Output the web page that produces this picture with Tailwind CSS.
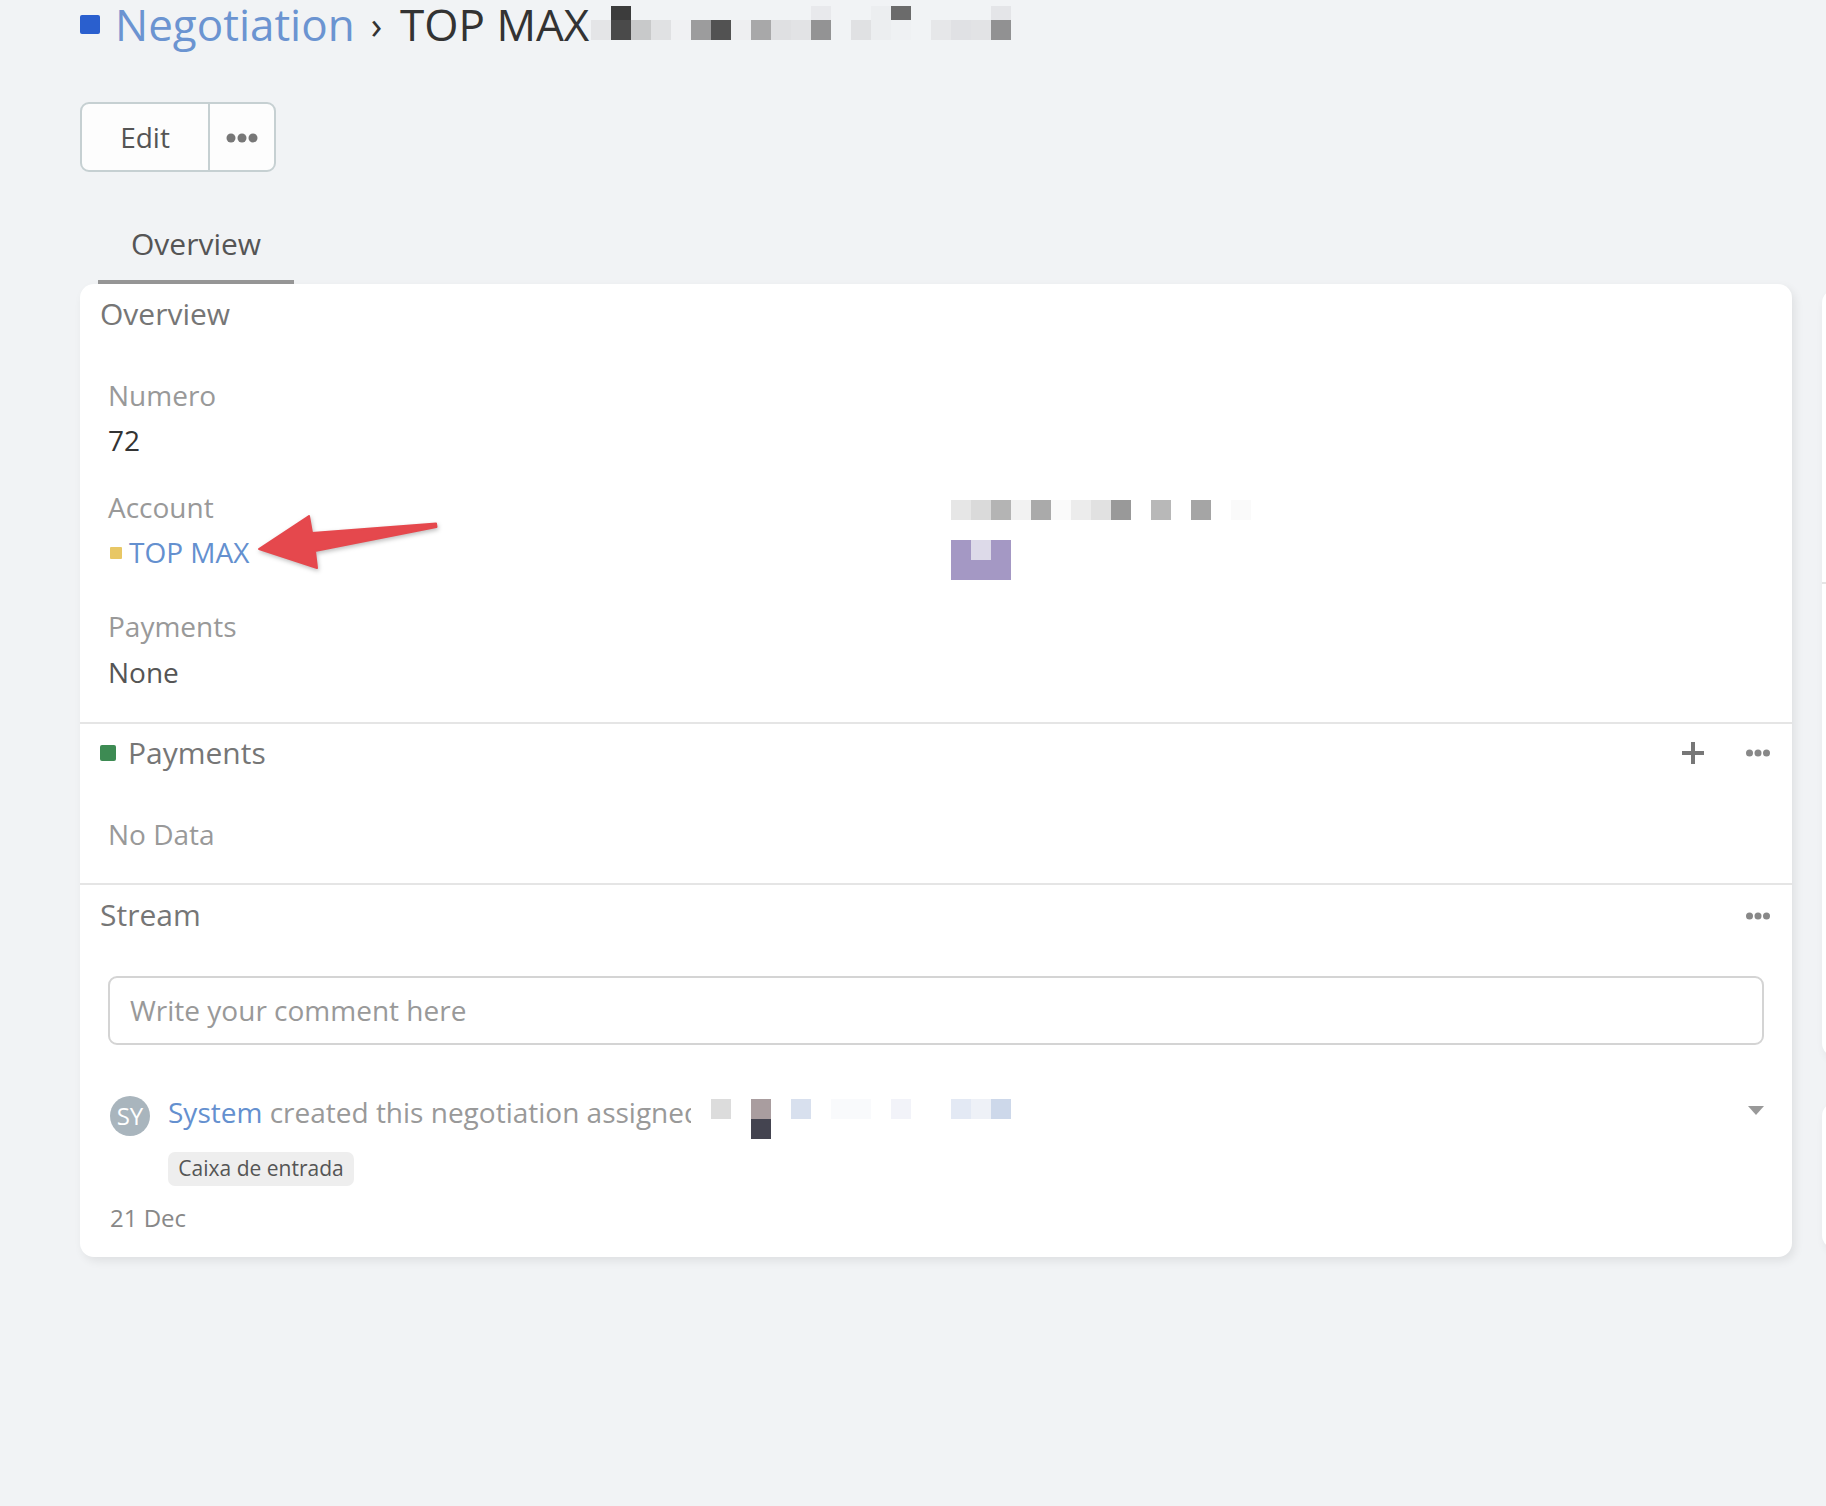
<!DOCTYPE html>
<html lang="en">
<head>
<meta charset="utf-8">
<title>Negotiation</title>
<script src="https://cdn.jsdelivr.net/npm/@tailwindcss/browser@4"></script>
</head>
<body class="bg-[#f1f3f5] font-['Open_Sans',sans-serif] antialiased overflow-hidden">
<div class="relative w-[1826px] h-[1506px] overflow-hidden pl-[80px]">

  <!-- Header -->
  <div class="relative h-[48px] flex items-center whitespace-nowrap text-[44px] leading-[48px]">
    <span class="w-[20px] h-[19px] rounded-[2px] bg-[#2a5fce] mr-[15px] mt-[1px]"></span>
    <span class="text-[#6b94d1]">Negotiation</span>
    <span class="text-[#333333] ml-[16px] mr-[18px] text-[38px]">›</span>
    <span class="text-[#333333]">TOP MAX</span>
    <!-- pixelated title -->
    <div class="absolute left-[511px] top-[6px] flex flex-col">
      <div class="flex h-[14px]">
        <i class="w-[20px]"></i>
        <i class="w-[20px] bg-[#3c3c3c]"></i>
        <i class="w-[180px]"></i>
        <i class="w-[20px] bg-[#e8e9ec]"></i>
        <i class="w-[40px]"></i>
        <i class="w-[20px] bg-[#eceef0]"></i>
        <i class="w-[20px] bg-[#6b6b6b]"></i>
        <i class="w-[80px]"></i>
        <i class="w-[20px] bg-[#e4e5e8]"></i>
      </div>
      <div class="flex h-[20px]">
        <i class="w-[20px] bg-[#e4e5e7]"></i>
        <i class="w-[20px] bg-[#4a4a4a]"></i>
        <i class="w-[20px] bg-[#c8c9ca]"></i>
        <i class="w-[20px] bg-[#e0e1e3]"></i>
        <i class="w-[20px] bg-[#f0f1f3]"></i>
        <i class="w-[20px] bg-[#9c9c9d]"></i>
        <i class="w-[20px] bg-[#525252]"></i>
        <i class="w-[20px] bg-[#eeeff1]"></i>
        <i class="w-[20px] bg-[#a8a8a9]"></i>
        <i class="w-[20px] bg-[#dfe0e2]"></i>
        <i class="w-[20px] bg-[#e2e3e5]"></i>
        <i class="w-[20px] bg-[#939394]"></i>
        <i class="w-[20px]"></i>
        <i class="w-[20px] bg-[#e0e1e3]"></i>
        <i class="w-[20px] bg-[#eceef0]"></i>
        <i class="w-[20px] bg-[#eff1f3]"></i>
        <i class="w-[20px]"></i>
        <i class="w-[20px] bg-[#e6e7e9]"></i>
        <i class="w-[20px] bg-[#e0e1e4]"></i>
        <i class="w-[20px] bg-[#e2e3e5]"></i>
        <i class="w-[20px] bg-[#919192]"></i>
      </div>
    </div>
  </div>

  <!-- Buttons -->
  <div class="mt-[54px] flex w-[196px] h-[70px] rounded-[9px] border-2 border-[#c6d0d2] bg-[#fdfdfd] text-[#555555] text-[28px]">
    <button class="w-[128px] h-full border-r-2 border-[#c6d0d2]">Edit</button>
    <button class="flex-1 flex items-center justify-center pt-[2px]">
      <svg class="w-[32px] h-[10px]" viewBox="0 0 32 10" fill="#777777"><circle cx="5" cy="5" r="4.5"/><circle cx="16" cy="5" r="4.5"/><circle cx="27" cy="5" r="4.5"/></svg>
    </button>
  </div>

  <!-- Tabs -->
  <div class="mt-[52px] ml-[18px] w-[196px] pl-[33px] pb-[16px] border-b-4 border-[#979797] text-[30px] leading-[40px] text-[#555555]">Overview</div>

  <div class="flex gap-[30px] w-[2400px] items-start">
    <!-- Main card -->
    <main class="w-[1712px] shrink-0 bg-white rounded-[14px] shadow-[3px_4px_10px_rgba(0,0,0,0.08)] text-[28px] leading-[40px]">
      <!-- Overview -->
      <section class="pt-[10px] pb-[30px]">
        <h2 class="pl-[20px] text-[30px] text-[#767676]">Overview</h2>
        <div class="mt-[41px] pl-[28px]">
          <div class="text-[#999999]">Numero</div>
          <div class="mt-[5px] text-[#333333]">72</div>
          <div class="mt-[27px] grid grid-cols-[843px_1fr]">
            <div>
              <div class="text-[#999999]">Account</div>
              <div class="mt-[5px] flex items-center text-[#6490cf]">
                <span class="w-[12px] h-[12px] rounded-[1px] bg-[#e8c765] mr-[7px] mt-[2px] ml-[2px]"></span>TOP MAX
              </div>
            </div>
            <div class="pt-[13px]">
              <div class="flex h-[20px]">
                <i class="w-[20px] bg-[#e6e6e6]"></i>
                <i class="w-[20px] bg-[#dadada]"></i>
                <i class="w-[20px] bg-[#b4b4b4]"></i>
                <i class="w-[20px] bg-[#f2f2f2]"></i>
                <i class="w-[20px] bg-[#aaaaaa]"></i>
                <i class="w-[20px] bg-[#fafafa]"></i>
                <i class="w-[20px] bg-[#ececec]"></i>
                <i class="w-[20px] bg-[#e1e1e1]"></i>
                <i class="w-[20px] bg-[#999999]"></i>
                <i class="w-[20px]"></i>
                <i class="w-[20px] bg-[#b8b8b8]"></i>
                <i class="w-[20px]"></i>
                <i class="w-[20px] bg-[#a5a5a5]"></i>
                <i class="w-[20px]"></i>
                <i class="w-[20px] bg-[#fafafa]"></i>
              </div>
              <div class="mt-[20px] w-[60px] h-[40px] bg-[#a498c4]">
                <div class="ml-[20px] w-[20px] h-[20px] bg-[#dddae9]"></div>
              </div>
            </div>
          </div>
          <div class="mt-[26px] text-[#999999]">Payments</div>
          <div class="mt-[6px] text-[#555555]">None</div>
        </div>
      </section>

      <!-- Payments -->
      <section class="border-t-2 border-[#e5e5e5] pt-[9px] pb-[29px]">
        <div class="flex items-center pl-[20px] pr-[22px]">
          <span class="w-[16px] h-[16px] rounded-[2px] bg-[#3d8b53] mr-[12px]"></span>
          <h2 class="text-[30px] text-[#767676]">Payments</h2>
          <svg class="ml-auto w-[22px] h-[22px]" viewBox="0 0 22 22" stroke="#777777" stroke-width="4"><path d="M0 11H22M11 0V22"/></svg>
          <svg class="ml-[42px] w-[24px] h-[8px]" viewBox="0 0 24 8" fill="#888888"><circle cx="3.5" cy="4" r="3.5"/><circle cx="12" cy="4" r="3.5"/><circle cx="20.5" cy="4" r="3.5"/></svg>
        </div>
        <div class="mt-[41px] pl-[28px] text-[#999999]">No Data</div>
      </section>

      <!-- Stream -->
      <section class="border-t-2 border-[#e5e5e5] pt-[10px] pb-[23px]">
        <div class="flex items-center justify-between pl-[20px] pr-[22px]">
          <h2 class="text-[30px] text-[#767676]">Stream</h2>
          <svg class="w-[24px] h-[8px] mt-[2px]" viewBox="0 0 24 8" fill="#888888"><circle cx="3.5" cy="4" r="3.5"/><circle cx="12" cy="4" r="3.5"/><circle cx="20.5" cy="4" r="3.5"/></svg>
        </div>
        <div class="mt-[41px] ml-[28px] w-[1656px] h-[69px] rounded-[9px] border-2 border-[#d4d4d4] pl-[20px] leading-[65px] text-[#999999]">Write your comment here</div>

        <div class="relative mt-[51px] pl-[30px] flex h-[40px]">
          <span class="w-[40px] h-[40px] rounded-full bg-[#a9b5bd] text-white text-[24px] flex items-center justify-center shrink-0">SY</span>
          <div class="ml-[18px] -mt-[4px] w-[523px] overflow-hidden whitespace-nowrap text-[#999999]"><span class="text-[#6490cf]">System</span> created this negotiation assigned to</div>
          <!-- pixelated user name -->
          <div class="absolute left-[631px] top-[3px]">
            <div class="flex h-[20px]">
              <i class="w-[20px] bg-[#dcdcdc]"></i>
              <i class="w-[20px]"></i>
              <i class="w-[20px] bg-[#a99d9f]"></i>
              <i class="w-[20px]"></i>
              <i class="w-[20px] bg-[#d8e0ee]"></i>
              <i class="w-[20px]"></i>
              <i class="w-[40px] bg-[#f9fafc]"></i>
              <i class="w-[20px]"></i>
              <i class="w-[20px] bg-[#f2f3f9]"></i>
              <i class="w-[40px]"></i>
              <i class="w-[20px] bg-[#e3e9f4]"></i>
              <i class="w-[20px] bg-[#eef1f7]"></i>
              <i class="w-[20px] bg-[#cdd8ea]"></i>
            </div>
            <div class="ml-[40px] w-[20px] h-[20px] bg-[#444450]"></div>
          </div>
          <svg class="absolute right-[28px] top-[10px] w-[16px] h-[9px]" viewBox="0 0 16 9" fill="#999999"><path d="M0 0H16L8 9Z"/></svg>
        </div>

        <div class="mt-[16px] ml-[88px] w-[186px] h-[34px] rounded-[7px] bg-[#eeeeee] text-[#555555] text-[21px] leading-[32px] text-center">Caixa de entrada</div>
        <div class="mt-[16px] pl-[30px] text-[24px] leading-[32px] text-[#888888]">21 Dec</div>
      </section>
    </main>

    <!-- Side column, cut by the window edge -->
    <aside class="w-[500px] shrink-0 flex flex-col gap-[45px] mt-[5px]">
      <div class="h-[768px] bg-white rounded-[14px] shadow-[3px_4px_10px_rgba(0,0,0,0.08)] pt-[293px]">
        <div class="border-t-2 border-[#e5e5e5]"></div>
      </div>
      <div class="h-[147px] bg-white rounded-[14px] shadow-[3px_4px_10px_rgba(0,0,0,0.08)]"></div>
    </aside>
  </div>

  <!-- Annotation arrow -->
  <svg class="absolute left-[250px] top-[505px] w-[195px] h-[75px] drop-shadow-[1px_2px_2px_rgba(0,0,0,0.25)]" viewBox="250 505 195 75" fill="#e5484d" stroke="#e5484d" stroke-width="2" stroke-linejoin="round">
    <path d="M259 549 L309 516 L312 533 L436 523.500 L436.500 527 L315 551 L317 568 Z"/>
  </svg>
</div>
</body>
</html>
